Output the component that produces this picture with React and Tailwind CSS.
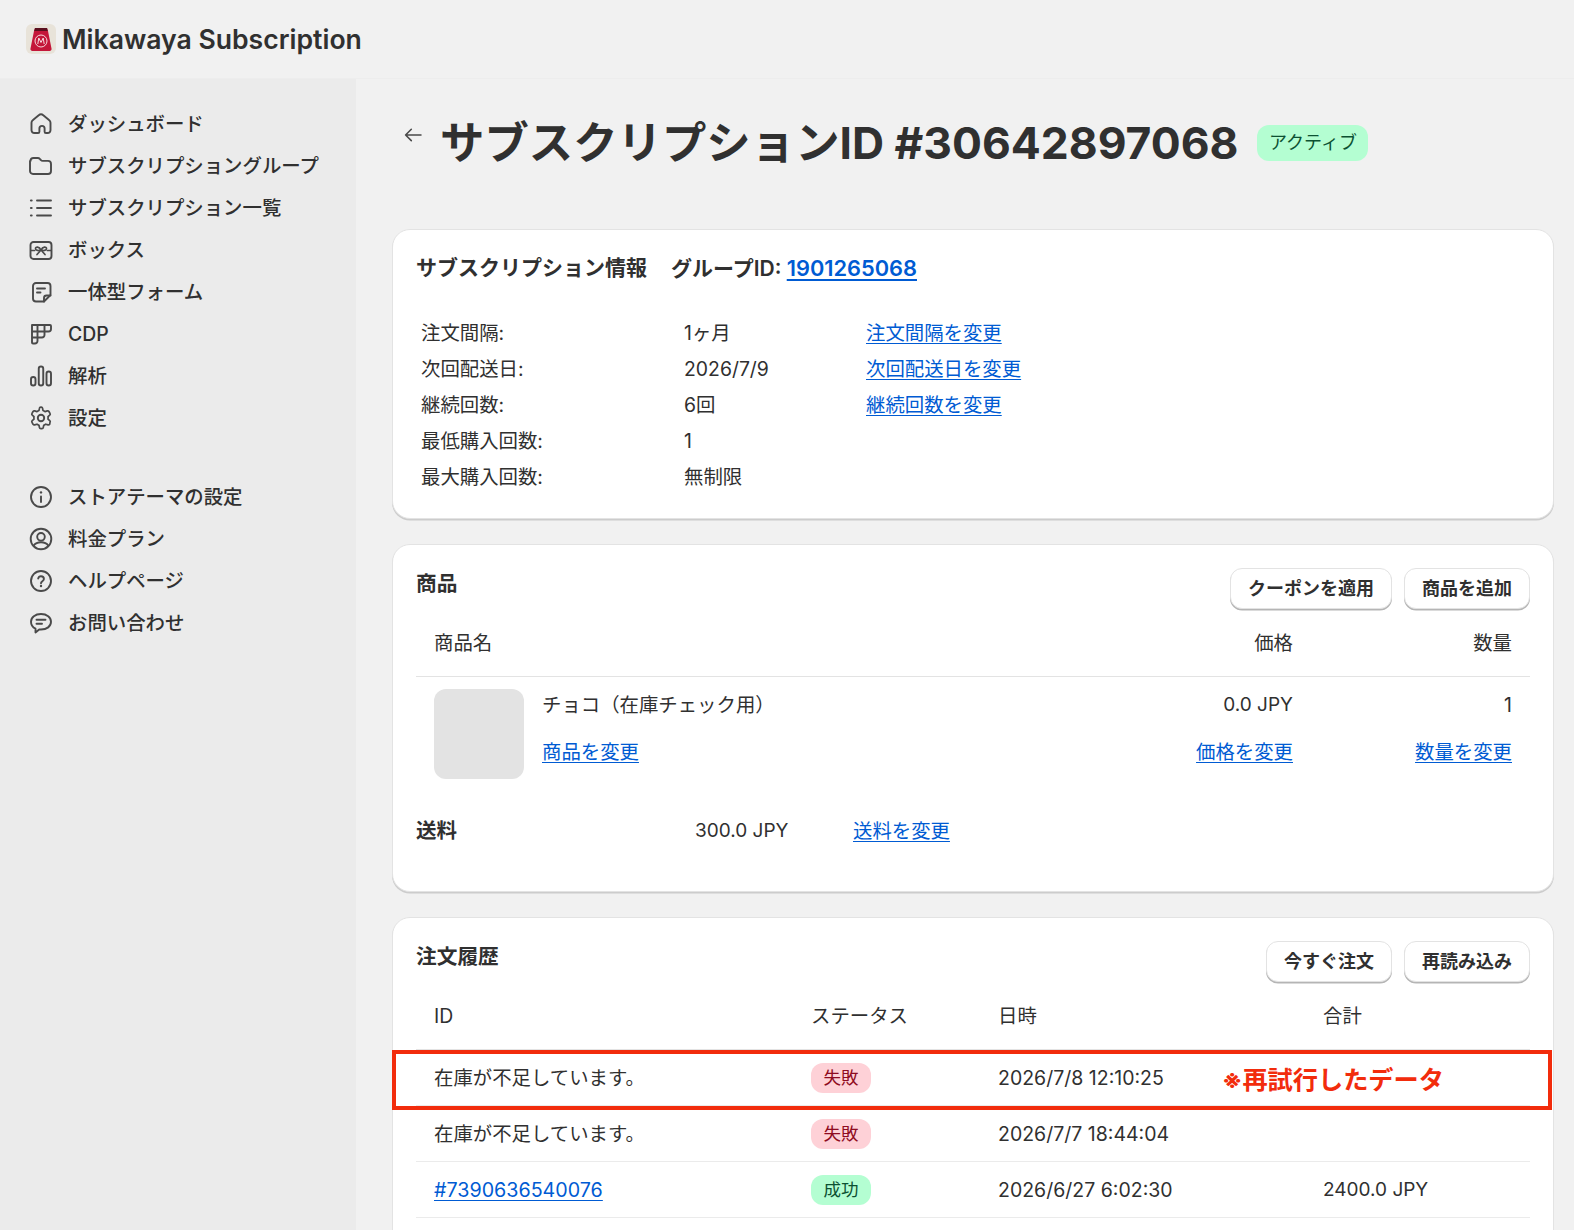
import React from "react";

const Icon = ({ children }) => (
  <svg width="24" height="24" viewBox="0 0 24 24" fill="none" stroke="#4a4a4a" strokeWidth="1.900" strokeLinecap="round" strokeLinejoin="round" className="shrink-0">
    {children}
  </svg>
);

const navTop = [
  {
    label: "ダッシュボード",
    icon: <path d="M2.500 18.200v-7.400c0-1 .4-1.900 1.200-2.500l6-5a3.500 3.500 0 0 1 4.600 0l6 5c.8.600 1.200 1.500 1.200 2.500v7.400a3 3 0 0 1-3 2.800h-1.600c-.7 0-1.300-.6-1.300-1.300v-3.200a2.600 2.600 0 0 0-5.200 0v3.200c0 .7-.6 1.300-1.300 1.300H5.500a3 3 0 0 1-3-2.800Z" />,
  },
  {
    label: "サブスクリプショングループ",
    icon: <path d="M1.500 7a3 3 0 0 1 3-3h4.300c.8 0 1.500.3 2 .9l1 1.100c.5.600 1.300.9 2 .9h5.200a3 3 0 0 1 3 3v7.100a3 3 0 0 1-3 3h-15a3 3 0 0 1-3-3V7Z" />,
  },
  {
    label: "サブスクリプション一覧",
    icon: (
      <>
        <path d="M8 4.500h14M8 12h14M8 19.500h14" />
        <path d="M2 4.500h.6M2 12h.6M2 19.500h.6" strokeWidth="2.200" />
      </>
    ),
  },
  {
    label: "ボックス",
    icon: (
      <>
        <rect x="1.500" y="4" width="21" height="17" rx="3" />
        <path d="M12 12c-1.800-3.800-5.500-3.500-5.500-1.500S9.500 13 12 12Zm0 0c1.800-3.800 5.500-3.500 5.500-1.500S14.500 13 12 12Zm0 0-4 4.500M12 12l4 4.500M2 12.500h3.500M18.500 12.500H22" strokeWidth="1.700" />
      </>
    ),
  },
  {
    label: "一体型フォーム",
    icon: (
      <>
        <path d="M15 21.500H7a3 3 0 0 1-3-3V6a3 3 0 0 1 3-3h11.500a3 3 0 0 1 3 3v9L15 21.500Z" />
        <path d="M8 8.500h8M8 12.500h3.500" />
        <path d="M15 21.500V18a2.500 2.500 0 0 1 2.500-2.500h4" />
      </>
    ),
  },
  {
    label: "CDP",
    icon: <path d="M3 3h18a1 1 0 0 1 1 1v3a2.500 2.500 0 0 1-2.500 2.500H15.500V13a2.500 2.500 0 0 1-2.500 2.500H8.500V19A2.500 2.500 0 0 1 6 21.500H4a1 1 0 0 1-1-1V3Zm5.500 0v12.500M15.500 3v6.500M3 9.500h12.500M3 15.500h5.500" />,
  },
  {
    label: "解析",
    icon: (
      <>
        <rect x="2" y="13" width="4.500" height="8.500" rx="2.250" />
        <rect x="9.750" y="2.500" width="4.500" height="19" rx="2.250" />
        <rect x="17.500" y="7.500" width="4.500" height="14" rx="2.250" />
      </>
    ),
  },
  {
    label: "設定",
    icon: (
      <>
        <circle cx="12" cy="12" r="3.200" />
        <path d="m10.300 2.200-.5 2.500a7.800 7.800 0 0 0-2.300 1.300L5 5.200a1.600 1.600 0 0 0-1.800.7L2 8a1.600 1.600 0 0 0 .3 2l1.900 1.700a7.800 7.800 0 0 0 0 2.600L2.300 16a1.600 1.600 0 0 0-.3 2l1.200 2.100c.4.600 1.100.9 1.800.7l2.500-.8a7.800 7.800 0 0 0 2.300 1.300l.5 2.500c.1.700.8 1.200 1.500 1.200h1.200c.7 0 1.400-.5 1.500-1.200l.5-2.500a7.800 7.800 0 0 0 2.300-1.300l2.500.8c.7.200 1.400-.1 1.800-.7L22 18a1.600 1.600 0 0 0-.3-2l-1.900-1.700a7.800 7.800 0 0 0 0-2.600L21.700 10a1.600 1.600 0 0 0 .3-2l-1.200-2.100a1.600 1.600 0 0 0-1.800-.7l-2.500.8a7.800 7.800 0 0 0-2.300-1.300l-.5-2.500A1.500 1.500 0 0 0 12.200 1h-.4c-.7 0-1.400.5-1.500 1.200Z" transform="translate(1.200 .2) scale(.9)" />
      </>
    ),
  },
];

const navBottom = [
  {
    label: "ストアテーマの設定",
    icon: (
      <>
        <circle cx="12" cy="12" r="10" />
        <path d="M12 11.500v5.500" />
        <path d="M12 7.400h.01" strokeWidth="2.400" />
      </>
    ),
  },
  {
    label: "料金プラン",
    icon: (
      <>
        <circle cx="12" cy="12" r="10.300" />
        <circle cx="12" cy="9.800" r="3.800" />
        <path d="M4.800 18.500c1.500-2.200 4-3.200 7.200-3.200s5.700 1 7.200 3.200" />
      </>
    ),
  },
  {
    label: "ヘルプページ",
    icon: (
      <>
        <circle cx="12" cy="12" r="10" />
        <path d="M9.200 9.500A2.900 2.900 0 0 1 12 7.300c1.600 0 2.900 1.100 2.900 2.600 0 2.300-2.900 2.300-2.900 4.300" />
        <path d="M12 17h.01" strokeWidth="2.400" />
      </>
    ),
  },
  {
    label: "お問い合わせ",
    icon: (
      <>
        <path d="M12 3c5.800 0 10 3.200 10 7.800s-4.200 7.700-10 7.700c-.6 0-1.200 0-1.800-.1L6.500 21.500v-3.800C3.700 16.400 2 13.900 2 10.800 2 6.200 6.200 3 12 3Z" />
        <path d="M7.500 8.800h9M7.500 12.800h5.500" />
      </>
    ),
  },
];

const NavItem = ({ item }) => (
  <div className="flex items-center h-[42px] pl-[29px] gap-[15px] font-medium text-[#303030]">
    <Icon>{item.icon}</Icon>
    <span>{item.label}</span>
  </div>
);

const Link = ({ children, className = "" }) => (
  <a href="#" className={`text-[#005bd3] underline underline-offset-[3px] ${className}`}>
    {children}
  </a>
);

const Button = ({ children }) => (
  <button className="h-[41px] px-[17px] bg-white rounded-[12px] text-[18px] font-semibold text-[#303030] border border-[#e3e3e3] shadow-[0_1.5px_0_0_#b5b5b5]">
    {children}
  </button>
);

const Card = ({ children, className = "" }) => (
  <section className={`bg-white rounded-[18px] border border-[#e3e3e3] shadow-[0_1.5px_0_0_#cccccc] px-[23px] ${className}`}>
    {children}
  </section>
);

const Badge = ({ children, color }) => (
  <span
    className={`inline-flex items-center justify-center w-[60px] h-[30px] rounded-[12px] text-[17.500px] ${
      color === "red" ? "bg-[#fed1d7] text-[#8e0b21]" : "bg-[#b4fed2] text-[#0c5132]"
    }`}
  >
    {children}
  </span>
);

const infoRows = [
  ["注文間隔:", "1ヶ月", "注文間隔を変更"],
  ["次回配送日:", "2026/7/9", "次回配送日を変更"],
  ["継続回数:", "6回", "継続回数を変更"],
  ["最低購入回数:", "1", null],
  ["最大購入回数:", "無制限", null],
];

const orders = [
  { id: "在庫が不足しています。", status: "失敗", color: "red", date: "2026/7/8 12:10:25", total: "" },
  { id: "在庫が不足しています。", status: "失敗", color: "red", date: "2026/7/7 18:44:04", total: "" },
  { id: "#7390636540076", link: true, status: "成功", color: "green", date: "2026/6/27 6:02:30", total: "2400.0 JPY" },
];

const App = () => {
  return (
    <div className="relative h-[1230px] overflow-hidden bg-[#f1f1f1] text-[#303030] text-[19.400px] leading-[28px] font-['Inter','Noto_Sans_CJK_JP',sans-serif]">
      {/* top bar */}
      <header className="h-[78px] flex items-center pl-[26px] pb-[1px] gap-[6px]">
        <div className="w-[30px] h-[30px] rounded-[6px] bg-[#e8e3d9] flex items-center justify-center">
          <svg width="22" height="24" viewBox="0 0 22 24">
            <path d="M5 1h12l1 3 3.500 17.500a2 2 0 0 1-2 2.500H2.500a2 2 0 0 1-2-2.500L4 4Z" fill="#c4163a" />
            <path d="M5 1h12l.8 3H4.200Z" fill="#5a0f1e" />
            <circle cx="11" cy="14" r="6" fill="none" stroke="#f7d9de" strokeWidth="1" />
            <path d="M7.800 17l1-6 2.200 4.500L13.200 11l1 6" fill="none" stroke="#f7d9de" strokeWidth="1" />
          </svg>
        </div>
        <span className="text-[26.600px] leading-[34px] font-semibold">Mikawaya Subscription</span>
      </header>

      <div className="flex h-[1152px] border-t border-[#ededed]">
        <aside className="w-[356px] shrink-0 bg-[#ebebeb] pt-[24px]">
          {navTop.map((item) => (
            <NavItem key={item.label} item={item} />
          ))}
          <div className="h-[37px]" />
          {navBottom.map((item) => (
            <NavItem key={item.label} item={item} />
          ))}
        </aside>

        <main className="flex-1 pl-[36px] pr-[20px]">
          <div className="flex items-center h-[150px] pb-[22px]">
            <svg width="24" height="24" viewBox="0 0 24 24" fill="none" stroke="#4a4a4a" strokeWidth="1.800" strokeLinecap="round" strokeLinejoin="round" className="ml-[9px] mr-[15px] mb-[14px]">
              <path d="M21 12H3.500M10 5.500 3.500 12l6.500 6.500" transform="translate(1.500 .4) scale(.88)" />
            </svg>
            <h1 className="text-[44.400px] leading-[56px] font-bold">サブスクリプションID #30642897068</h1>
            <span className="ml-[19px] h-[36px] w-[111px] flex items-center justify-center rounded-[12px] bg-[#b4fed2] text-[#0c5132] text-[18px]">
              アクティブ
            </span>
          </div>

          {/* subscription info */}
          <Card className="h-[290px] pt-[24px]">
            <div className="flex items-center gap-[24px] font-semibold text-[21px] h-[28px]">
              <span>サブスクリプション情報</span>
              <span>
                グループID: <Link className="text-[21.800px]">1901265068</Link>
              </span>
            </div>
            <div className="mt-[33px] pl-[5px]">
              {infoRows.map(([label, value, action]) => (
                <div key={label} className="flex items-center h-[36px]">
                  <span className="w-[263px]">{label}</span>
                  <span className="w-[182px]">{value}</span>
                  {action && <Link>{action}</Link>}
                </div>
              ))}
            </div>
          </Card>

          {/* products */}
          <Card className="h-[348px] mt-[25px] pt-[23px]">
            <div className="flex justify-between items-start">
              <h2 className="font-semibold text-[20.700px] mt-[2px]">商品</h2>
              <div className="flex gap-[12px]">
                <Button>クーポンを適用</Button>
                <Button>商品を追加</Button>
              </div>
            </div>
            <div className="flex items-center h-[68px] pl-[18px] pr-[18px] border-b border-[#e3e3e3]">
              <span className="flex-1">商品名</span>
              <span className="w-[100px] text-right">価格</span>
              <span className="w-[219px] text-right">数量</span>
            </div>
            <div className="flex pl-[18px] pr-[18px] pt-[12px]">
              <div className="w-[90px] h-[90px] rounded-[12px] bg-[#e3e3e3] shrink-0" />
              <div className="flex-1 ml-[18px] flex flex-col">
                <span className="h-[28px] mt-[2px]">チョコ（在庫チェック用）</span>
                <Link className="mt-[19px] self-start">商品を変更</Link>
              </div>
              <div className="flex flex-col items-end">
                <span className="h-[28px] mt-[2px] text-[19px]">0.0 JPY</span>
                <Link className="mt-[19px]">価格を変更</Link>
              </div>
              <div className="flex flex-col items-end w-[219px]">
                <span className="h-[28px] mt-[2px]">1</span>
                <Link className="mt-[19px]">数量を変更</Link>
              </div>
            </div>
            <div className="flex items-center mt-[38px] h-[28px]">
              <span className="w-[279px] font-semibold text-[20.500px]">送料</span>
              <span className="w-[158px] text-[19px]">300.0 JPY</span>
              <Link>送料を変更</Link>
            </div>
          </Card>

          {/* order history */}
          <Card className="h-[400px] mt-[25px] pt-[23px]">
            <div className="flex justify-between items-start">
              <h2 className="font-semibold text-[20.700px] mt-[2px]">注文履歴</h2>
              <div className="flex gap-[12px]">
                <Button>今すぐ注文</Button>
                <Button>再読み込み</Button>
              </div>
            </div>
            <div className="grid grid-cols-[377px_187px_325px_1fr] items-center h-[68px] pt-[1px] pl-[18px] border-b border-[#e3e3e3]">
              <span>ID</span>
              <span>ステータス</span>
              <span>日時</span>
              <span>合計</span>
            </div>
            {orders.map((order) => (
              <div key={order.date} className="grid grid-cols-[377px_187px_325px_1fr] items-center h-[56px] pl-[18px] border-b border-[#ebebeb]">
                {order.link ? <Link className="justify-self-start text-[19.700px]">{order.id}</Link> : <span>{order.id}</span>}
                <span className="flex">
                  <Badge color={order.color}>{order.status}</Badge>
                </span>
                <span className="text-[19.500px]">{order.date}</span>
                <span className="text-[19px]">{order.total}</span>
              </div>
            ))}
          </Card>
        </main>
      </div>

      {/* annotation drawn over the table */}
      <div className="absolute left-[392px] top-[1050px] w-[1160px] h-[60px] border-[4px] border-[#f22c0c]" />
      <span className="absolute left-[1222px] top-[1063px] text-[25.200px] leading-[34px] font-bold text-[#f22c0c]">※再試行したデータ</span>
    </div>
  );
};

export default App;
